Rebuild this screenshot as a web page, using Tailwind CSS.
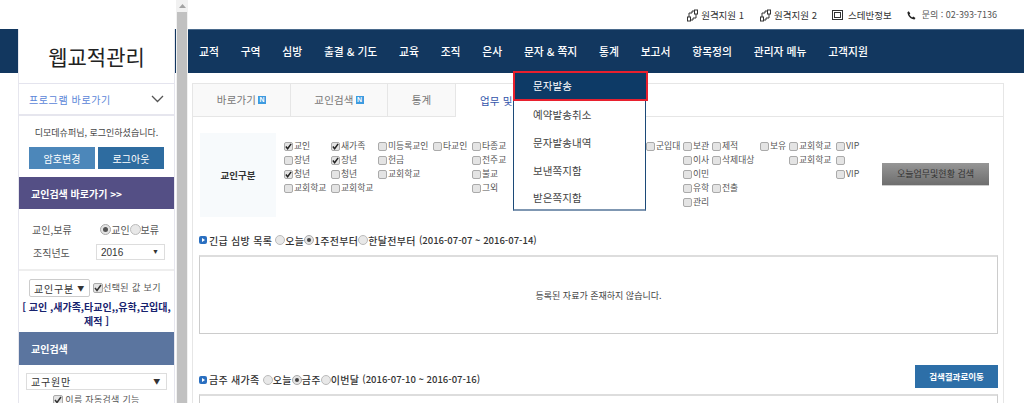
<!DOCTYPE html>
<html lang="ko">
<head>
<meta charset="utf-8">
<script src="https://cdn.jsdelivr.net/npm/@tailwindcss/browser@4"></script>
</head>
<body class="m-0 bg-white">
<div class="flex w-[1024px] h-[403px] overflow-hidden bg-white text-[#555] text-[9px] font-['Noto_Sans_CJK_KR','Liberation_Sans',sans-serif]">

  <!-- left column -->
  <div class="relative w-[176px] shrink-0 pt-[29px]">
    <div class="h-[44px] bg-[#12375f]"></div>
    <aside class="absolute left-[18px] top-[29px] w-[157px] h-[374px] bg-white border-x border-[#e6e6ee] flex flex-col overflow-hidden *:shrink-0">
      <div class="h-[55px] flex items-center justify-center border-b border-[#e4e4ee] text-[21px] leading-none text-[#222]">웹교적관리</div>
      <div class="h-[32px] flex items-center justify-between pl-[10px] pr-[10px] border-b-2 border-[#e6e6ee] text-[10px] tracking-[0.6px] text-[#5b86d8]">
        <span>프로그램 바로가기</span>
        <svg width="13" height="8" viewBox="0 0 13 8" fill="none" stroke="#555" stroke-width="1.3"><path d="M1 1l5.500 5.500L12 1"/></svg>
      </div>
      <div class="h-[31px] pt-[2px] flex items-center justify-center text-[9px] text-[#444]">디모데슈퍼님, 로그인하셨습니다.</div>
      <div class="flex gap-[3px] px-[10px]">
        <div class="w-[66px] h-[22px] flex items-center justify-center bg-[#4c87ba] text-white text-[10px]">암호변경</div>
        <div class="w-[66px] h-[22px] flex items-center justify-center bg-[#2e6ca0] text-white text-[10px]">로그아웃</div>
      </div>
      <div class="mt-[8px] h-[32px] flex items-center pl-[12px] bg-[#544f85] text-white text-[10px] font-bold">교인검색 바로가기 &gt;&gt;</div>
      <div class="flex items-center justify-between h-[35px] pt-[6px] pl-[13px] pr-[15px] text-[10px]">
        <span>교인,보류</span>
        <span class="flex items-center">
          <span class="w-[11px] h-[11px] rounded-full border border-[#aaa] bg-[#e4e4e4] flex items-center justify-center"><span class="w-[5px] h-[5px] rounded-full bg-[#555]"></span></span>교인<span class="w-[11px] h-[11px] rounded-full border border-[#bbb] bg-[#e8e8e8]"></span>보류
        </span>
      </div>
      <div class="flex items-center justify-between h-[16px] pl-[14px] pr-[9px] text-[10px]">
        <span>조직년도</span>
        <div class="w-[69px] h-[16px] border border-[#ddd] flex items-center justify-between pl-[4px] pr-[5px] text-[#333] font-['Liberation_Sans']">2016<span class="text-[7px]">▼</span></div>
      </div>
      <div class="mt-[9px] border-t-2 border-[#eee] h-[10px]"></div>
      <div class="flex items-center pl-[10px]">
        <div class="w-[61px] h-[18px] border border-[#ccc] rounded-[2px] flex items-center justify-between pl-[4px] pr-[4px] text-[10px] tracking-[0.8px] text-[#333]">교인구분<span class="text-[7px]">▼</span></div>
        <span class="ml-[3px] w-[10px] h-[10px] rounded-[2px] border border-[#aaa] bg-[#e4e4e4] flex items-center justify-center"><svg width="8" height="8" viewBox="0 0 8 8" fill="none" stroke="#333" stroke-width="1.500"><path d="M1 4l2 2.500L7 1"/></svg></span>
        <span class="text-[9px] tracking-[0.4px]">선택된 값 보기</span>
      </div>
      <div class="mt-[3px] text-center text-[10px] leading-[14px] font-bold text-[#17226e] whitespace-nowrap">[ 교인 ,새가족,타교인,,유학,군입대,<br>제적 ]</div>
      <div class="mt-[4px] h-[33px] flex items-center pl-[12px] bg-[#5b759f] text-white text-[10px] font-bold">교인검색</div>
      <div class="mt-[8px] mx-[7px] w-[141px] h-[17px] border border-[#ddd] flex items-center justify-between pl-[4px] pr-[5px] text-[10px] tracking-[0.8px] text-[#333]">교구원만<span class="text-[7px]">▼</span></div>
      <div class="mt-[3px] flex items-center justify-center gap-[2px] text-[9px] tracking-[0.3px]">
        <span class="w-[10px] h-[10px] rounded-[2px] border border-[#aaa] bg-[#e4e4e4] flex items-center justify-center"><svg width="8" height="8" viewBox="0 0 8 8" fill="none" stroke="#333" stroke-width="1.500"><path d="M1 4l2 2.500L7 1"/></svg></span>이름 자동검색 기능
      </div>
    </aside>
  </div>

  <!-- scrollbar -->
  <div class="w-[12px] shrink-0 bg-[#f1f1f1] flex flex-col items-center">
    <div class="h-[12px] flex items-center justify-center"><svg width="7" height="4" viewBox="0 0 7 4"><path d="M3.500 0L7 4H0z" fill="#a3a3a3"/></svg></div>
    <div class="w-[10px] flex-1 bg-[#c1c1c1]"></div>
  </div>

  <!-- main -->
  <div class="flex-1 min-w-0 flex flex-col relative">
    <div class="h-[29px] flex items-center justify-end pr-[27px] gap-[15px] text-[#333] text-[9.500px] pt-[1px]">
      <span class="flex items-center gap-[2px]">
        <svg width="13" height="13" viewBox="0 0 13 13" fill="none" stroke="#333"><rect x="1.500" y="8" width="3" height="4"/><rect x="8.500" y="1" width="3" height="4"/><path d="M3 8V4h3V2h2M10 5v4H7v2H5"/></svg>원격지원 1</span>
      <span class="flex items-center gap-[2px]">
        <svg width="13" height="13" viewBox="0 0 13 13" fill="none" stroke="#333"><rect x="1.500" y="8" width="3" height="4"/><rect x="8.500" y="1" width="3" height="4"/><path d="M3 8V4h3V2h2M10 5v4H7v2H5"/></svg>원격지원 2</span>
      <span class="flex items-center gap-[5px]">
        <svg width="11" height="10" viewBox="0 0 11 10" fill="none" stroke="#333"><rect x=".5" y=".5" width="10" height="9"/><rect x="2.500" y="2.500" width="6" height="5"/></svg>스테반정보</span>
      <span class="flex items-center gap-[5px]">
        <svg width="9" height="9" viewBox="0 0 9 9" class="mr-[1px]"><path d="M1.800.3L3.300 2.500 2.400 3.500c.5 1.200 1.400 2.100 2.800 2.900l1-.9 2.300 1.600-1 1.400C4 8.500.6 5 .4 1.300z" fill="#222"/></svg><span class="text-[#555] text-[9px]">문의 : 02-393-7136</span></span>
    </div>
    <nav class="h-[44px] bg-[#12375f] border-t border-[#4a6a8c] flex items-center pl-[11px] gap-[21.750px] text-white text-[10.800px] font-medium whitespace-nowrap">
      <span>교적</span><span>구역</span><span>심방</span><span>출결 &amp; 기도</span><span>교육</span><span>조직</span><span>은사</span><span>문자 &amp; 쪽지</span><span>통계</span><span>보고서</span><span>항목정의</span><span>관리자 메뉴</span><span>고객지원</span>
    </nav>

    <div class="flex-1 pl-[4px] pr-[20px] pt-[10px] min-h-0">
      <div class="h-[400px] border border-[#e6e6e6]">
        <div class="flex h-[33px] text-[10.500px] tracking-[0.2px] text-[#777]">
          <div class="w-[98px] flex items-center justify-center gap-[2px] bg-[#f9f9f9] border-r border-b border-[#e6e6e6]">바로가기<span class="w-[8px] h-[8px] bg-[#3d9be0] text-white text-[7px] leading-[8px] text-center font-bold font-['Liberation_Sans']">N</span></div>
          <div class="w-[97px] flex items-center justify-center gap-[2px] bg-[#f9f9f9] border-r border-b border-[#e6e6e6]">교인검색<span class="w-[8px] h-[8px] bg-[#3d9be0] text-white text-[7px] leading-[8px] text-center font-bold font-['Liberation_Sans']">N</span></div>
          <div class="w-[68px] flex items-center justify-center bg-[#f9f9f9] border-r border-b border-[#e6e6e6]">통계</div>
          <div class="w-[100px] pl-[24px] flex items-center text-[#3355aa] whitespace-nowrap">업무 및 현황</div>
          <div class="flex-1 border-b border-[#e6e6e6]"></div>
        </div>

        <div class="flex pl-[7px] pr-[14px] pt-[16px] h-[113px]">
          <div class="w-[76px] h-[84px] shrink-0 bg-[#f7fafc] flex items-center justify-center font-bold text-[9.500px] text-[#333]">교인구분</div>
          <div class="w-[606px] shrink-0 pl-[8px] pt-[6px] grid grid-cols-[47px_47px_55px_39px_38px_136px_37px_29px_48px_29px_47px_auto] auto-rows-[14px] items-center whitespace-nowrap text-[8.800px]">
            <span class="flex items-center gap-[1px]"><i class="w-[9px] h-[9px] rounded-[2px] border border-[#aaa] bg-[#e4e4e4] flex items-center justify-center"><svg width="7" height="7" viewBox="0 0 8 8" fill="none" stroke="#222" stroke-width="1.700"><path d="M1 4l2 2.500L7 1"/></svg></i>교인</span>
            <span class="flex items-center gap-[1px]"><i class="w-[9px] h-[9px] rounded-[2px] border border-[#aaa] bg-[#e4e4e4] flex items-center justify-center"><svg width="7" height="7" viewBox="0 0 8 8" fill="none" stroke="#222" stroke-width="1.700"><path d="M1 4l2 2.500L7 1"/></svg></i>새가족</span>
            <span class="flex items-center gap-[1px]"><i class="w-[9px] h-[9px] rounded-[2px] border border-[#aaa] bg-[#e4e4e4]"></i>미등록교인</span>
            <span class="flex items-center gap-[1px]"><i class="w-[9px] h-[9px] rounded-[2px] border border-[#aaa] bg-[#e4e4e4]"></i>타교인</span>
            <span class="flex items-center gap-[1px]"><i class="w-[9px] h-[9px] rounded-[2px] border border-[#aaa] bg-[#e4e4e4]"></i>타종교</span>
            <span></span>
            <span class="flex items-center gap-[1px]"><i class="w-[9px] h-[9px] rounded-[2px] border border-[#aaa] bg-[#e4e4e4]"></i>군입대</span>
            <span class="flex items-center gap-[1px]"><i class="w-[9px] h-[9px] rounded-[2px] border border-[#aaa] bg-[#e4e4e4]"></i>보관</span>
            <span class="flex items-center gap-[1px]"><i class="w-[9px] h-[9px] rounded-[2px] border border-[#aaa] bg-[#e4e4e4]"></i>제적</span>
            <span class="flex items-center gap-[1px]"><i class="w-[9px] h-[9px] rounded-[2px] border border-[#aaa] bg-[#e4e4e4]"></i>보유</span>
            <span class="flex items-center gap-[1px]"><i class="w-[9px] h-[9px] rounded-[2px] border border-[#aaa] bg-[#e4e4e4]"></i>교회학교</span>
            <span class="flex items-center gap-[1px]"><i class="w-[9px] h-[9px] rounded-[2px] border border-[#aaa] bg-[#e4e4e4]"></i>VIP</span>

            <span class="flex items-center gap-[1px]"><i class="w-[9px] h-[9px] rounded-[2px] border border-[#aaa] bg-[#e4e4e4]"></i>장년</span>
            <span class="flex items-center gap-[1px]"><i class="w-[9px] h-[9px] rounded-[2px] border border-[#aaa] bg-[#e4e4e4] flex items-center justify-center"><svg width="7" height="7" viewBox="0 0 8 8" fill="none" stroke="#222" stroke-width="1.700"><path d="M1 4l2 2.500L7 1"/></svg></i>장년</span>
            <span class="flex items-center gap-[1px]"><i class="w-[9px] h-[9px] rounded-[2px] border border-[#aaa] bg-[#e4e4e4]"></i>헌금</span>
            <span></span>
            <span class="flex items-center gap-[1px]"><i class="w-[9px] h-[9px] rounded-[2px] border border-[#aaa] bg-[#e4e4e4]"></i>전주교</span>
            <span></span><span></span>
            <span class="flex items-center gap-[1px]"><i class="w-[9px] h-[9px] rounded-[2px] border border-[#aaa] bg-[#e4e4e4]"></i>이사</span>
            <span class="flex items-center gap-[1px]"><i class="w-[9px] h-[9px] rounded-[2px] border border-[#aaa] bg-[#e4e4e4]"></i>삭제대상</span>
            <span></span>
            <span class="flex items-center gap-[1px]"><i class="w-[9px] h-[9px] rounded-[2px] border border-[#aaa] bg-[#e4e4e4]"></i>교회학교</span>
            <span class="flex items-center gap-[1px]"><i class="w-[9px] h-[9px] rounded-[2px] border border-[#aaa] bg-[#e4e4e4]"></i></span>

            <span class="flex items-center gap-[1px]"><i class="w-[9px] h-[9px] rounded-[2px] border border-[#aaa] bg-[#e4e4e4] flex items-center justify-center"><svg width="7" height="7" viewBox="0 0 8 8" fill="none" stroke="#222" stroke-width="1.700"><path d="M1 4l2 2.500L7 1"/></svg></i>청년</span>
            <span class="flex items-center gap-[1px]"><i class="w-[9px] h-[9px] rounded-[2px] border border-[#aaa] bg-[#e4e4e4]"></i>청년</span>
            <span class="flex items-center gap-[1px]"><i class="w-[9px] h-[9px] rounded-[2px] border border-[#aaa] bg-[#e4e4e4]"></i>교회학교</span>
            <span></span>
            <span class="flex items-center gap-[1px]"><i class="w-[9px] h-[9px] rounded-[2px] border border-[#aaa] bg-[#e4e4e4]"></i>불교</span>
            <span></span><span></span>
            <span class="flex items-center gap-[1px]"><i class="w-[9px] h-[9px] rounded-[2px] border border-[#aaa] bg-[#e4e4e4]"></i>이민</span>
            <span></span><span></span><span></span>
            <span class="flex items-center gap-[1px]"><i class="w-[9px] h-[9px] rounded-[2px] border border-[#aaa] bg-[#e4e4e4]"></i>VIP</span>

            <span class="flex items-center gap-[1px]"><i class="w-[9px] h-[9px] rounded-[2px] border border-[#aaa] bg-[#e4e4e4]"></i>교회학교</span>
            <span class="flex items-center gap-[1px]"><i class="w-[9px] h-[9px] rounded-[2px] border border-[#aaa] bg-[#e4e4e4]"></i>교회학교</span>
            <span></span><span></span>
            <span class="flex items-center gap-[1px]"><i class="w-[9px] h-[9px] rounded-[2px] border border-[#aaa] bg-[#e4e4e4]"></i>그외</span>
            <span></span><span></span>
            <span class="flex items-center gap-[1px]"><i class="w-[9px] h-[9px] rounded-[2px] border border-[#aaa] bg-[#e4e4e4]"></i>유학</span>
            <span class="flex items-center gap-[1px]"><i class="w-[9px] h-[9px] rounded-[2px] border border-[#aaa] bg-[#e4e4e4]"></i>전출</span>
            <span></span><span></span><span></span>

            <span></span><span></span><span></span><span></span><span></span><span></span><span></span>
            <span class="flex items-center gap-[1px]"><i class="w-[9px] h-[9px] rounded-[2px] border border-[#aaa] bg-[#e4e4e4]"></i>관리</span>
          </div>
          <div class="w-[107px] h-[23px] mt-[30px] shrink-0 flex items-center justify-center bg-gradient-to-b from-[#969696] to-[#6e6e6e] border-b border-[#ccc] text-[#333] text-[9px]">오늘업무및현황 검색</div>
        </div>

        <div class="pl-[6px] pr-[5px]">
          <div class="h-[20px] mb-[5px] flex items-center text-[10px] tracking-[0.3px] text-[#333] font-medium whitespace-nowrap">
            <span class="w-[8px] h-[8px] rounded-[2px] bg-[#2a6fc0] mr-[2px] flex items-center justify-center"><span class="w-0 h-0 border-y-[2px] border-y-transparent border-l-[3px] border-l-white"></span></span>
            긴급 심방 목록&nbsp;
            <span class="w-[10px] h-[10px] rounded-full border border-[#bbb] bg-[#e8e8e8]"></span>오늘<span class="w-[10px] h-[10px] rounded-full border border-[#aaa] bg-[#e4e4e4] flex items-center justify-center"><span class="w-[4px] h-[4px] rounded-full bg-[#444]"></span></span>1주전부터<span class="w-[10px] h-[10px] rounded-full border border-[#bbb] bg-[#e8e8e8]"></span>한달전부터&nbsp;<span class="text-[9.500px] tracking-normal">(2016-07-07 ~ 2016-07-14)</span>
          </div>
          <div class="h-[79px] border border-[#ccc] border-t-2 border-t-[#ddd] flex items-center justify-center pt-[2px] text-[9px] text-[#444]">등록된 자료가 존재하지 않습니다.</div>
          <div class="mt-[31px] h-[23px] flex items-center justify-between text-[10px] tracking-[0.3px] text-[#333] font-medium whitespace-nowrap">
            <div class="flex items-center pt-[6px]">
              <span class="w-[8px] h-[8px] rounded-[2px] bg-[#2a6fc0] mr-[2px] flex items-center justify-center"><span class="w-0 h-0 border-y-[2px] border-y-transparent border-l-[3px] border-l-white"></span></span>
              금주 새가족&nbsp;
              <span class="w-[10px] h-[10px] rounded-full border border-[#bbb] bg-[#e8e8e8]"></span>오늘<span class="w-[10px] h-[10px] rounded-full border border-[#aaa] bg-[#e4e4e4] flex items-center justify-center"><span class="w-[4px] h-[4px] rounded-full bg-[#444]"></span></span>금주<span class="w-[10px] h-[10px] rounded-full border border-[#bbb] bg-[#e8e8e8]"></span>이번달&nbsp;<span class="text-[9.500px] tracking-normal">(2016-07-10 ~ 2016-07-16)</span>
            </div>
            <div class="w-[83px] h-[23px] flex items-center justify-center bg-[#2d6fa8] text-white text-[8.500px] font-bold tracking-normal">검색결과로이동</div>
          </div>
          <div class="mt-[6px] h-[40px] border border-[#ccc] border-t-2 border-t-[#ddd]"></div>
        </div>
      </div>
    </div>

    <!-- dropdown menu -->
    <div class="absolute left-[325px] top-[71px] w-[133px] h-[140px] bg-white border border-[#1c4a78] border-b-2 border-b-[#7f97b2] text-[10.500px] tracking-[0.1px] text-[#444]">
      <div class="h-[30px] -ml-[1px] -mt-[1px] w-[135px] flex items-center pl-[18px] bg-[#0d3a66] border-2 border-[#e8202e] text-white">문자발송</div>
      <div class="h-[28px] flex items-center pl-[19px]">예약발송취소</div>
      <div class="h-[28px] flex items-center pl-[19px]">문자발송내역</div>
      <div class="h-[27px] flex items-center pl-[19px]">보낸쪽지함</div>
      <div class="h-[27px] flex items-center pl-[19px]">받은쪽지함</div>
    </div>
  </div>
</div>
</body>
</html>
